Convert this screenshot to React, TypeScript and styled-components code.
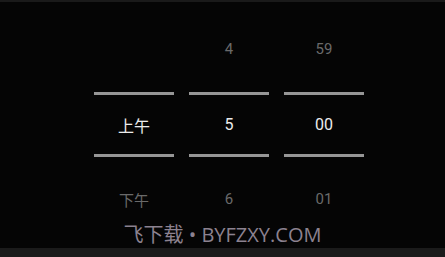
import React from "react";
import styled, { createGlobalStyle } from "styled-components";

const Global = createGlobalStyle`
  html, body { margin: 0; padding: 0; background: #050505; }
  #root { width: 445px; height: 257px; }
`;

const Page = styled.div`
  position: relative;
  width: 445px;
  height: 257px;
  display: flex;
  flex-direction: column;
  background: #050505;
  overflow: hidden;
`;

const TopEdge = styled.div`
  height: 2px;
  background: #1a1a1a;
  flex: none;
`;

const Picker = styled.div`
  flex: 1;
  display: flex;
  justify-content: center;
  gap: 15px;
  padding-top: 32px;
  padding-left: 13px;
`;

const Column = styled.div`
  width: 80px;
  display: flex;
  flex-direction: column;
  align-items: stretch;
`;

const Item = styled.div<{ $selected?: boolean; $h: number; $mt?: number }>`
  height: ${(p) => p.$h}px;
  margin-top: ${(p) => p.$mt ?? 0}px;
  display: flex;
  align-items: center;
  justify-content: center;
  font-family: Roboto, "Noto Sans CJK SC", sans-serif;
  font-size: ${(p) => (p.$selected ? 16 : 15)}px;
  color: ${(p) => (p.$selected ? "#ececec" : "#6a6a6a")};
  font-weight: 400;
`;

const Divider = styled.div<{ $mt?: number }>`
  height: 3px;
  margin-top: ${(p) => p.$mt ?? 0}px;
  background: #969696;
`;

const Footer = styled.div`
  height: 9px;
  flex: none;
  background: #1b1b1b;
`;

const Watermark = styled.div`
  position: absolute;
  left: 0;
  right: 0;
  top: 222px;
  text-align: center;
  font-family: "Open Sans", "Noto Sans CJK SC", sans-serif;
  font-size: 20px;
  line-height: 26px;
  font-weight: 400;
  color: #8c8290;
  white-space: nowrap;
`;

const columns = [
  { prev: "", cur: "上午", next: "下午" },
  { prev: "4", cur: "5", next: "6" },
  { prev: "59", cur: "00", next: "01" },
];

export default function App() {
  return (
    <>
      <Global />
      <Page>
        <TopEdge />
        <Picker>
          {columns.map((c, i) => (
            <Column key={i}>
              <Item $h={30}>{c.prev}</Item>
              <Divider $mt={28} />
              <Item $h={59} $selected>
                {c.cur}
              </Item>
              <Divider />
              <Item $h={30} $mt={27}>
                {c.next}
              </Item>
            </Column>
          ))}
        </Picker>
        <Footer />
        <Watermark>飞下载 • BYFZXY.COM</Watermark>
      </Page>
    </>
  );
}
